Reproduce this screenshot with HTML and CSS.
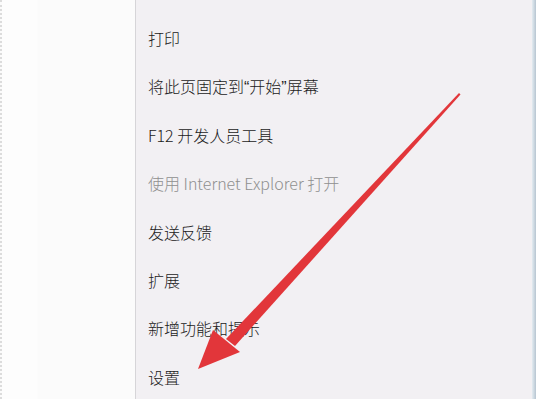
FILE: index.html
```html
<html>
  <head>
    <meta charset="utf-8">
    <title>Menu</title>
    <link rel="stylesheet" href="styles.css">
  </head>
  <body>
    <div id="page">
      <div id="blank"></div>
      <div id="menu">
        <div class="item">打印</div>
        <div class="item">将此页固定到<span class="quote">“</span>开始<span class="quote">”</span>屏幕</div>
        <div class="item">F12 开发人员工具</div>
        <div class="item disabled">使用 Internet Explorer 打开</div>
        <div class="item">发送反馈</div>
        <div class="item">扩展</div>
        <div class="item">新增功能和提示</div>
        <div class="item">设置</div>
      </div>
      <div id="edge"></div>
    </div>

    <!-- red arrow drawn over the menu -->
    <svg id="arrow" width="536" height="399" viewBox="0 0 536 399">
      <polygon points="459,93 460.5,94.5 235,346 226,339" fill="#e2363a"/>
      <polygon points="198,369 213,330 240,352" fill="#e2363a"/>
    </svg>
  </body>
</html>
```

FILE: styles.css
```css
*, *:before, *:after {
  box-sizing: border-box;
  padding: 0;
  margin: 0;
}

body {
  width: 536px;
  height: 399px;
  overflow: hidden;
  font-family: "Microsoft YaHei", "Noto Sans CJK SC", sans-serif;
  background: #fff;
}

#page {
  display: flex;
  height: 399px;
}

#blank {
  width: 135px;
  border-left: 2px dotted #dcdcdc;
  background: linear-gradient(to right, #fdfdfd 0, #fdfdfd 35px, #fbfbfb 36px, #fbfbfb);
}

#menu {
  flex: 1;
  display: flex;
  flex-direction: column;
  padding-top: 14px;
  padding-left: 12px;
  background: #f2f0f3;
  border-left: 1px solid #d6d5d8;
}

.item {
  height: 48.4px;
  line-height: 48.4px;
  font-size: 16px;
  font-weight: 300;
  color: #1a1a1a;
  white-space: nowrap;
}

.item.disabled {
  color: #8f8f8f;
}

.quote {
  font-family: "Liberation Sans", sans-serif;
}

#edge {
  width: 4px;
  background: linear-gradient(to right, #e4ecf1, #b7c5d1);
}

#arrow {
  position: absolute;
  left: 0;
  top: 0;
}
```
